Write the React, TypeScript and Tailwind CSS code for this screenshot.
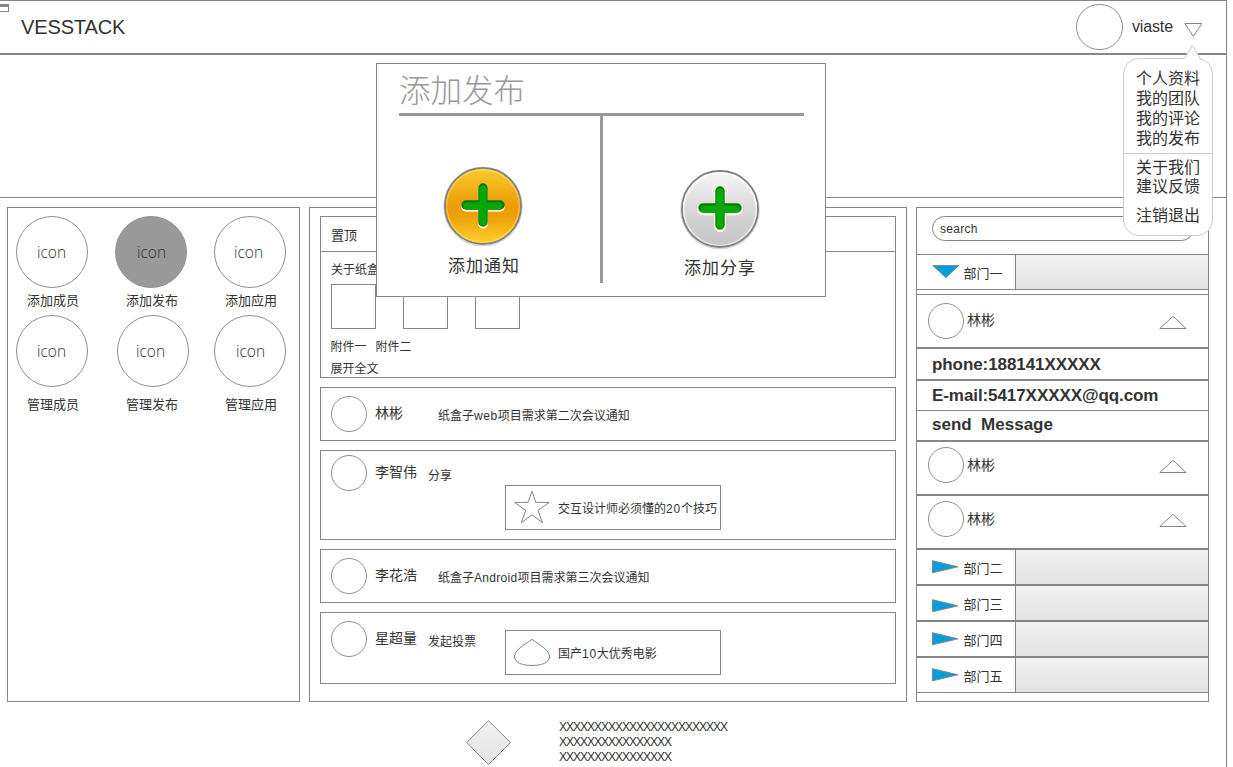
import React from "react";

type Shortcut = { label: string; circle: string; active?: boolean };

const topShortcuts: Shortcut[] = [
  { label: "添加成员", circle: "pl-[20px]" },
  { label: "添加发布", circle: "pl-[21px]", active: true },
  { label: "添加应用", circle: "pl-[19px]" },
];

const bottomShortcuts: Shortcut[] = [
  { label: "管理成员", circle: "pl-[20px]" },
  { label: "管理发布", circle: "pl-[18px] ml-[2px]" },
  { label: "管理应用", circle: "pl-[21px]" },
];

function ShortcutRow({ items, labelGap }: { items: Shortcut[]; labelGap: string }) {
  return (
    <div className="flex">
      {items.map((item) => (
        <div key={item.label} className="w-[99px] shrink-0">
          <div
            className={`flex h-[72px] w-[72px] items-center rounded-full border border-[#8f8f8f] font-['Open_Sans','Noto_Sans',sans-serif] text-[15.5px] font-light leading-[20px] ${item.circle} ${
              item.active ? "bg-[#999999] text-[#333333]" : ""
            }`}
          >
            icon
          </div>
          <div className={`h-[16px] pl-[11px] text-[13px] leading-[16px] ${labelGap}`}>{item.label}</div>
        </div>
      ))}
    </div>
  );
}

function Avatar() {
  return <div className="h-[36px] w-[36px] shrink-0 rounded-full border border-[#8f8f8f]" />;
}

function ContactRow({ offset, nameGap }: { offset: string; nameGap: string }) {
  return (
    <div className={`flex h-[54px] items-start border-y border-[#868686] pl-[11px] ${offset}`}>
      <Avatar />
      <div className={`ml-[3px] w-[192px] text-[14px] leading-[20px] ${nameGap}`}>林彬</div>
      <svg width="28" height="14" className="mt-[12px]" fill="none" stroke="#868686">
        <path d="M0.8 13.5L14 1.3L27.2 13.5Z" />
      </svg>
    </div>
  );
}

function Department({ name, open, arrow }: { name: string; open?: boolean; arrow?: string }) {
  return (
    <div className="flex h-[36px] border-y border-[#868686]">
      <div className="flex w-[99px] shrink-0 items-start border-r border-[#868686] pl-[15px]">
        {open ? (
          <svg width="28" height="14" className="mt-[10px]" fill="#009fdd" stroke="#868686">
            <path d="M0.8 0.5H26.8L13.8 12.7Z" />
          </svg>
        ) : (
          <svg width="28" height="14" className={arrow} fill="#009fdd" stroke="#868686">
            <path d="M0.5 0.7V12.8L26 6.8Z" />
          </svg>
        )}
        <span className="ml-[3.5px] mt-[9px] whitespace-nowrap text-[13px] leading-[20px]">{name}</span>
      </div>
      <div className="flex-1 bg-gradient-to-b from-[#f2f2f2] to-[#e3e3e3]" />
    </div>
  );
}

function PlusBadge({ tone }: { tone: "orange" | "silver" }) {
  const orange = tone === "orange";
  return (
    <svg width="84" height="84" viewBox="0 0 84 84">
      <defs>
        <linearGradient id={`face-${tone}`} x1="0" y1="0" x2="0" y2="1">
          <stop offset="0" stopColor={orange ? "#fbc92f" : "#f7f7f7"} />
          <stop offset="0.5" stopColor={orange ? "#eb9d08" : "#dadada"} />
          <stop offset="0.62" stopColor={orange ? "#ec9f08" : "#d2d2d2"} />
          <stop offset="1" stopColor={orange ? "#ffcf2c" : "#c4c4c4"} />
        </linearGradient>
        <linearGradient id={`rim-${tone}`} x1="0" y1="0" x2="0" y2="1">
          <stop offset="0" stopColor={orange ? "#ffdc60" : "#ffffff"} />
          <stop offset="0.5" stopColor={orange ? "#f6b42a" : "#f2f2f2"} />
          <stop offset="1" stopColor={orange ? "#ffd94a" : "#dedede"} />
        </linearGradient>
      </defs>
      <circle cx="42" cy="42.6" r="39" fill="none" stroke="#d5d5d5" strokeWidth="1.5" />
      <circle cx="42" cy="42" r="38" fill={`url(#face-${tone})`} stroke="#808080" strokeWidth="1.8" />
      <circle cx="42" cy="42" r="36.3" fill="none" stroke={`url(#rim-${tone})`} strokeWidth="1.6" />
      <g strokeLinecap="round" fill="none">
        <path
          d={orange ? "M42 25V60M25 43H59" : "M42 25V59.500M25 42.500H59"}
          stroke={orange ? "#fff6dc" : "#ffffff"}
          strokeWidth={orange ? 9.5 : 11.5}
        />
        <path d="M42 24V58M25 41H59" stroke="#067a06" strokeWidth="9.4" />
        <path d="M42 25V58M26 42H58" stroke="#05a805" strokeWidth="7.2" />
      </g>
    </svg>
  );
}

function PublishDialog() {
  return (
    <div className="absolute left-[376px] top-[63px] h-[234px] w-[450px] border border-[#868686] bg-white px-[22px]">
      <div className="h-[49px] pt-[7px] text-[31.5px] font-light leading-[40px] text-[#999999]">添加发布</div>
      <div className="h-[3px] w-[405px] bg-[#999999]" />
      <div className="flex">
        <div className="h-[167px] w-[204px] border-r-[3px] border-[#999999] pl-[42px] pt-[48px]">
          <PlusBadge tone="orange" />
          <div className="ml-[7px] mt-[9px] text-[17px] leading-[20px] tracking-[1px]">添加通知</div>
        </div>
        <div className="pl-[75px] pt-[51px]">
          <PlusBadge tone="silver" />
          <div className="ml-[6px] mt-[8px] text-[17px] leading-[20px] tracking-[1px]">添加分享</div>
        </div>
      </div>
    </div>
  );
}

function UserMenu() {
  return (
    <div className="absolute left-[1123px] top-[58px] h-[178px] w-[90px] rounded-[16px] border border-[#cccccc] bg-white text-[16px] leading-[20px]">
      <svg width="20" height="16" className="absolute left-[58px] top-[-15px]" fill="#ffffff" stroke="#cccccc">
        <path d="M2 15L10.3 1.5L18.5 15" />
      </svg>
      <div className="h-[94px] pl-[12px] pt-[10px]">
        <div>个人资料</div>
        <div>我的团队</div>
        <div>我的评论</div>
        <div>我的发布</div>
      </div>
      <div className="border-t border-[#cccccc] pl-[12px] pt-[4px]">
        <div className="h-[19px]">关于我们</div>
        <div>建议反馈</div>
        <div className="mt-[9px]">注销退出</div>
      </div>
    </div>
  );
}

export default function App() {
  return (
    <div className="relative h-[767px] w-[1233px] overflow-hidden bg-white font-['Liberation_Sans','Noto_Sans_CJK_SC',sans-serif] text-[#333333]">
      <div className="h-[767px] w-[1227px] border-r border-[#868686]">
        <header className="flex h-[54px] items-start border-y border-[#868686] pl-[21px]">
          <div className="mt-[16px] w-[1055px] text-[20px] leading-[20px] tracking-[-0.12px]">VESSTACK</div>
          <div className="mt-[3px] h-[46px] w-[47px] rounded-full border border-[#8f8f8f]" />
          <div className="ml-[9px] mt-[16px] w-[52px] text-[16px] leading-[20px] tracking-[-0.15px]">viaste</div>
          <svg width="20" height="15" className="mt-[22px]" fill="none" stroke="#868686">
            <path d="M0.9 0.5H17.8L9.3 13.3Z" />
          </svg>
        </header>
        <div className="h-[144px] border-y border-[#868686]" />

        <main className="flex gap-[9px] pl-[7px] pt-[9px]">
          <section className="flex h-[495px] w-[293px] flex-col border border-[#868686] pl-[8px] pt-[8px]">
            <ShortcutRow items={topShortcuts} labelGap="mt-[5px] mb-[6px]" />
            <ShortcutRow items={bottomShortcuts} labelGap="mt-[10px]" />
          </section>

          <section className="flex h-[495px] w-[598px] flex-col gap-[9px] border border-[#868686] px-[10px] pt-[8px] text-[12px] leading-[20px]">
            <article className="h-[162px] border border-[#868686]">
              <div className="h-[35px] border-b border-[#868686] pl-[10px] pt-[9px] text-[13px]">置顶</div>
              <div className="pl-[10px] pt-[8px]">
                <div className="h-[24px]">关于纸盒</div>
                <div className="flex gap-[27px]">
                  <div className="h-[45px] w-[45px] border border-[#868686]" />
                  <div className="h-[45px] w-[45px] border border-[#868686]" />
                  <div className="h-[45px] w-[45px] border border-[#868686]" />
                </div>
                <div className="ml-[-0.5px] mt-[8px] flex gap-[9px]">
                  <span>附件一</span>
                  <span>附件二</span>
                </div>
                <div className="ml-[-0.5px] mt-[2px]">展开全文</div>
              </div>
            </article>

            <article className="flex h-[54px] items-start border border-[#868686] pl-[10px] pt-[8px]">
              <Avatar />
              <div className="ml-[8px] mt-[7px] w-[63px] text-[14px]">林彬</div>
              <div className="mt-[10px]">
                纸盒子<span className="tracking-[0.6px]">web</span>项目需求第二次会议通知
              </div>
            </article>

            <article className="h-[90px] border border-[#868686] pl-[10px] pt-[4px]">
              <div className="flex h-[30px] items-start">
                <Avatar />
                <div className="ml-[8px] mt-[7px] w-[53px] text-[14px]">李智伟</div>
                <div className="mt-[11px]">分享</div>
              </div>
              <div className="ml-[174px] flex h-[45px] w-[216px] items-start border border-[#868686] pl-[8px]">
                <svg width="36" height="38" className="mt-[4px]" fill="none" stroke="#868686">
                  <path d="M18 1.2L21.8 12.4H35.2L24 20.4L28.6 32.8L18 24.8L7.3 32.8L11.7 20.4L0.6 12.4H14Z" />
                </svg>
                <div className="ml-[8px] mt-[13px] whitespace-nowrap">
                  交互设计师必须懂的<span className="tracking-[0.8px]">20</span>个技巧
                </div>
              </div>
            </article>

            <article className="flex h-[54px] items-start border border-[#868686] pl-[10px] pt-[8px]">
              <Avatar />
              <div className="ml-[8px] mt-[7px] w-[63px] text-[14px]">李花浩</div>
              <div className="mt-[10px]">
                纸盒子<span className="tracking-[0.3px]">Android</span>项目需求第三次会议通知
              </div>
            </article>

            <article className="flex h-[72px] items-start border border-[#868686] pl-[10px] pt-[8px]">
              <Avatar />
              <div className="ml-[8px] mt-[7px] w-[53px] text-[14px]">星超量</div>
              <div className="mt-[11px] w-[77px]">发起投票</div>
              <div className="mt-[9px] flex h-[45px] w-[216px] items-start border border-[#868686] pl-[8px]">
                <svg width="36" height="30" className="mt-[7px]" fill="none" stroke="#868686">
                  <path d="M18 1.3C24 6 35.500 11.500 35.500 18.500C35.500 25 27 27.500 18 27.500C9 27.500 0.500 25 0.500 18.500C0.500 11.500 12 6 18 1.300Z" />
                </svg>
                <div className="ml-[8px] mt-[13px] whitespace-nowrap">
                  国产<span className="tracking-[0.7px]">10</span>大优秀电影
                </div>
              </div>
            </article>
          </section>

          <section className="h-[495px] w-[293px] border border-[#868686] pt-[8px]">
            <div className="ml-[15px] h-[25px] w-[262px] rounded-full border border-[#868686] pl-[7px] pt-[2px] text-[12px] leading-[20px] tracking-[0.3px]">
              search
            </div>
            <div className="mt-[13px]">
              <Department name="部门一" open />
            </div>
            <div className="mt-[4px]">
              <ContactRow offset="pt-[8px]" nameGap="mt-[7px]" />
            </div>
            <div className="text-[17px] font-bold leading-[20px] tracking-[-0.08px]">
              <div className="h-[32px] border-y border-[#868686] pl-[15px] pt-[6px]">phone:188141XXXXX</div>
              <div className="h-[31px] border-y border-[#868686] pl-[15px] pt-[5px]">E-mail:5417XXXXX@qq.com</div>
              <div className="h-[30px] border-b border-[#868686] pl-[15px] pt-[4px] tracking-normal">send&nbsp; Message</div>
            </div>
            <ContactRow offset="pt-[5px]" nameGap="mt-[8px]" />
            <ContactRow offset="pt-[5px]" nameGap="mt-[8px]" />
            <Department name="部门二" arrow="mt-[10px]" />
            <Department name="部门三" arrow="mt-[13px]" />
            <Department name="部门四" arrow="mt-[10px]" />
            <Department name="部门五" arrow="mt-[10px]" />
          </section>
        </main>

        <footer className="flex items-start pl-[466px] pt-[18px]">
          <svg width="46" height="46">
            <defs>
              <linearGradient id="diamond" x1="0" y1="0" x2="0" y2="1">
                <stop offset="0" stopColor="#f2f2f2" />
                <stop offset="1" stopColor="#e3e3e3" />
              </linearGradient>
            </defs>
            <path d="M22.500 0.700L44.500 22.500L22.500 44.500L0.700 22.500Z" fill="url(#diamond)" stroke="#868686" />
          </svg>
          <div className="ml-[47px] text-[12px] leading-[15px] tracking-[-1px]">
            <div>XXXXXXXXXXXXXXXXXXXXXXXX</div>
            <div>XXXXXXXXXXXXXXXX</div>
            <div>XXXXXXXXXXXXXXXX</div>
          </div>
        </footer>
      </div>

      <div className="absolute left-0 top-[4px] h-[8px] w-[9px] border-b border-r border-t-[3px] border-[#868686] bg-white" />
      <PublishDialog />
      <UserMenu />
    </div>
  );
}
